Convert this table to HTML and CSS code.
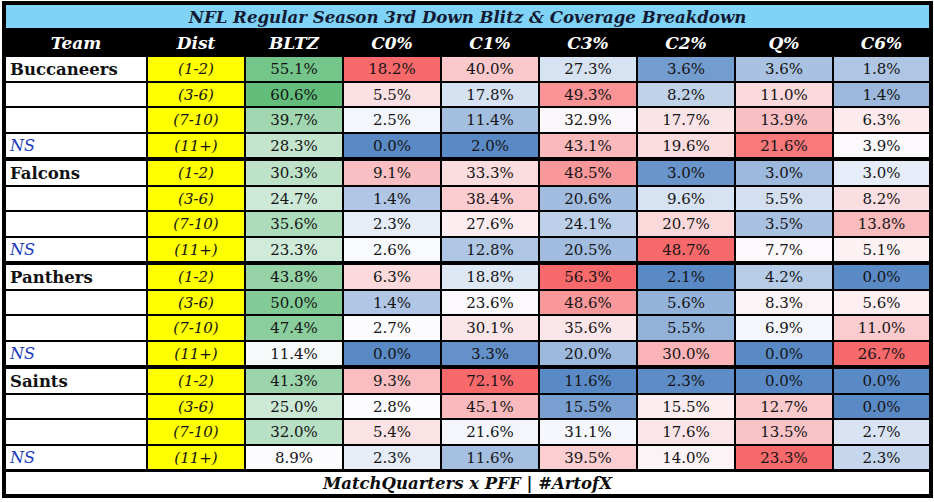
FILE: index.html
```html
<!DOCTYPE html>
<html>
<head>
<meta charset="utf-8">
<link rel="stylesheet" href="styles.css">
<script src="script.js" defer></script>
</head>
<body>
<div class="sheet">
  <div class="title">NFL Regular Season 3rd Down Blitz &amp; Coverage Breakdown</div>
  <div class="row head">
    <div class="c">Team</div><div class="c">Dist</div><div class="c">BLTZ</div><div class="c">C0%</div><div class="c">C1%</div><div class="c">C3%</div><div class="c">C2%</div><div class="c">Q%</div><div class="c">C6%</div>
  </div>
  <div class="body">
    <div class="group">
      <div class="row"><div class="c team">Buccaneers</div><div class="c dist">(1-2)</div><div class="c n">55.1%</div><div class="c n">18.2%</div><div class="c n">40.0%</div><div class="c n">27.3%</div><div class="c n">3.6%</div><div class="c n">3.6%</div><div class="c n">1.8%</div></div>
      <div class="row"><div class="c team"></div><div class="c dist">(3-6)</div><div class="c n">60.6%</div><div class="c n">5.5%</div><div class="c n">17.8%</div><div class="c n">49.3%</div><div class="c n">8.2%</div><div class="c n">11.0%</div><div class="c n">1.4%</div></div>
      <div class="row"><div class="c team"></div><div class="c dist">(7-10)</div><div class="c n">39.7%</div><div class="c n">2.5%</div><div class="c n">11.4%</div><div class="c n">32.9%</div><div class="c n">17.7%</div><div class="c n">13.9%</div><div class="c n">6.3%</div></div>
      <div class="row"><div class="c team ns">NS</div><div class="c dist">(11+)</div><div class="c n">28.3%</div><div class="c n">0.0%</div><div class="c n">2.0%</div><div class="c n">43.1%</div><div class="c n">19.6%</div><div class="c n">21.6%</div><div class="c n">3.9%</div></div>
    </div>
    <div class="group">
      <div class="row"><div class="c team">Falcons</div><div class="c dist">(1-2)</div><div class="c n">30.3%</div><div class="c n">9.1%</div><div class="c n">33.3%</div><div class="c n">48.5%</div><div class="c n">3.0%</div><div class="c n">3.0%</div><div class="c n">3.0%</div></div>
      <div class="row"><div class="c team"></div><div class="c dist">(3-6)</div><div class="c n">24.7%</div><div class="c n">1.4%</div><div class="c n">38.4%</div><div class="c n">20.6%</div><div class="c n">9.6%</div><div class="c n">5.5%</div><div class="c n">8.2%</div></div>
      <div class="row"><div class="c team"></div><div class="c dist">(7-10)</div><div class="c n">35.6%</div><div class="c n">2.3%</div><div class="c n">27.6%</div><div class="c n">24.1%</div><div class="c n">20.7%</div><div class="c n">3.5%</div><div class="c n">13.8%</div></div>
      <div class="row"><div class="c team ns">NS</div><div class="c dist">(11+)</div><div class="c n">23.3%</div><div class="c n">2.6%</div><div class="c n">12.8%</div><div class="c n">20.5%</div><div class="c n">48.7%</div><div class="c n">7.7%</div><div class="c n">5.1%</div></div>
    </div>
    <div class="group">
      <div class="row"><div class="c team">Panthers</div><div class="c dist">(1-2)</div><div class="c n">43.8%</div><div class="c n">6.3%</div><div class="c n">18.8%</div><div class="c n">56.3%</div><div class="c n">2.1%</div><div class="c n">4.2%</div><div class="c n">0.0%</div></div>
      <div class="row"><div class="c team"></div><div class="c dist">(3-6)</div><div class="c n">50.0%</div><div class="c n">1.4%</div><div class="c n">23.6%</div><div class="c n">48.6%</div><div class="c n">5.6%</div><div class="c n">8.3%</div><div class="c n">5.6%</div></div>
      <div class="row"><div class="c team"></div><div class="c dist">(7-10)</div><div class="c n">47.4%</div><div class="c n">2.7%</div><div class="c n">30.1%</div><div class="c n">35.6%</div><div class="c n">5.5%</div><div class="c n">6.9%</div><div class="c n">11.0%</div></div>
      <div class="row"><div class="c team ns">NS</div><div class="c dist">(11+)</div><div class="c n">11.4%</div><div class="c n">0.0%</div><div class="c n">3.3%</div><div class="c n">20.0%</div><div class="c n">30.0%</div><div class="c n">0.0%</div><div class="c n">26.7%</div></div>
    </div>
    <div class="group">
      <div class="row"><div class="c team">Saints</div><div class="c dist">(1-2)</div><div class="c n">41.3%</div><div class="c n">9.3%</div><div class="c n">72.1%</div><div class="c n">11.6%</div><div class="c n">2.3%</div><div class="c n">0.0%</div><div class="c n">0.0%</div></div>
      <div class="row"><div class="c team"></div><div class="c dist">(3-6)</div><div class="c n">25.0%</div><div class="c n">2.8%</div><div class="c n">45.1%</div><div class="c n">15.5%</div><div class="c n">15.5%</div><div class="c n">12.7%</div><div class="c n">0.0%</div></div>
      <div class="row"><div class="c team"></div><div class="c dist">(7-10)</div><div class="c n">32.0%</div><div class="c n">5.4%</div><div class="c n">21.6%</div><div class="c n">31.1%</div><div class="c n">17.6%</div><div class="c n">13.5%</div><div class="c n">2.7%</div></div>
      <div class="row"><div class="c team ns">NS</div><div class="c dist">(11+)</div><div class="c n">8.9%</div><div class="c n">2.3%</div><div class="c n">11.6%</div><div class="c n">39.5%</div><div class="c n">14.0%</div><div class="c n">23.3%</div><div class="c n">2.3%</div></div>
    </div>
  </div>
  <div class="footer">MatchQuarters x PFF | #ArtofX</div>
</div>
</body>
</html>
```
FILE: styles.css
```css
html, body {
  margin: 0;
  padding: 0;
  background: #ffffff;
}
body {
  font-family: "DejaVu Serif", "Liberation Serif", serif;
  color: #141414;
}
.sheet {
  margin: 1px 0 0 2px;
  width: 923px;
  border: 4px solid #000;
  background: #000;
  display: flex;
  flex-direction: column;
}
.title {
  height: 23px;
  background: #7fd3f7;
  color: #121a33;
  font-weight: bold;
  font-style: italic;
  font-size: 16.6px;
  display: flex;
  align-items: center;
  justify-content: center;
}
.row {
  display: grid;
  grid-template-columns: 140px repeat(7, 96px) 1fr;
  column-gap: 2px;
  height: 23.5px;
}
.head {
  height: 29px;
  background: #000;
  color: #fff;
  font-weight: bold;
  font-style: italic;
  font-size: 17px;
}
.head .c {
  background: #000;
  padding-top: 1px;
}
.c {
  display: flex;
  align-items: center;
  justify-content: center;
  background: #fff;
  white-space: nowrap;
  overflow: hidden;
  padding-top: 1px;
}
.body {
  display: flex;
  flex-direction: column;
  gap: 4px;
  margin-bottom: 3px;
}
.group {
  display: flex;
  flex-direction: column;
  gap: 2px;
}
.team {
  justify-content: flex-start;
  padding-left: 4px;
  font-weight: bold;
  font-size: 16.5px;
  color: #111;
}
.team.ns {
  font-weight: normal;
  font-style: italic;
  color: #1c3bbd;
  font-size: 16px;
}
.dist {
  background: #ffff00;
  font-style: italic;
  font-size: 15px;
}
.n {
  font-size: 15px;
}
.footer {
  height: 22px;
  background: #fff;
  color: #0d0d0d;
  font-weight: bold;
  font-style: italic;
  font-size: 16.5px;
  display: flex;
  align-items: center;
  justify-content: center;
}
```
FILE: script.js
```js
(function () {
  var rows = document.querySelectorAll('.group .row');
  var cols = [];
  rows.forEach(function (r) {
    var cells = r.querySelectorAll('.c');
    for (var i = 2; i < cells.length; i++) {
      if (!cols[i]) cols[i] = [];
      cols[i].push({ el: cells[i], v: parseFloat(cells[i].textContent) });
    }
  });
  function mix(a, b, t) {
    return 'rgb(' + [0, 1, 2].map(function (k) {
      return Math.round(a[k] + (b[k] - a[k]) * t);
    }).join(',') + ')';
  }
  var white = [252, 252, 255];
  var green = [99, 190, 123];
  var red = [248, 105, 107];
  var blue = [90, 138, 198];
  cols.forEach(function (list, i) {
    if (!list) return;
    var vals = list.map(function (o) { return o.v; }).sort(function (a, b) { return a - b; });
    var min = vals[0], max = vals[vals.length - 1];
    var pos = 0.5 * (vals.length - 1);
    var lo = Math.floor(pos);
    var mid = vals[lo] + (vals[lo + 1] - vals[lo]) * (pos - lo);
    list.forEach(function (o) {
      var c;
      if (i === 2) {
        c = mix(white, green, max > min ? (o.v - min) / (max - min) : 0);
      } else if (o.v >= mid) {
        c = mix(white, red, max > mid ? (o.v - mid) / (max - mid) : 0);
      } else {
        c = mix(white, blue, mid > min ? (mid - o.v) / (mid - min) : 0);
      }
      o.el.style.background = c;
    });
  });
})();
```
